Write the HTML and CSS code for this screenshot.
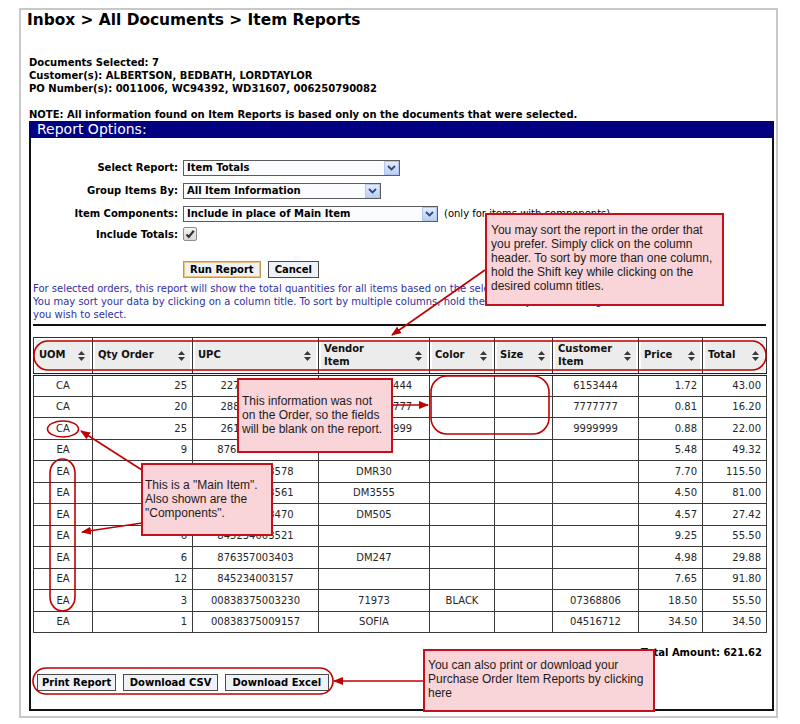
FILE: index.html
```html
<!DOCTYPE html>
<html>
<head>
<meta charset="utf-8">
<title>Item Reports</title>
<link rel="stylesheet" href="styles.css">
</head>
<body>
<div class="page">
  <h1 class="crumbs">Inbox &gt; All Documents &gt; Item Reports</h1>
  <div class="summary">
    <div>Documents Selected: 7</div>
    <div>Customer(s): ALBERTSON, BEDBATH, LORDTAYLOR</div>
    <div>PO Number(s): 0011006, WC94392, WD31607, 006250790082</div>
  </div>
  <div class="note">NOTE: All information found on Item Reports is based only on the documents that were selected.</div>
  <div class="bar">Report Options:</div>
  <div class="panel">
    <div class="form">
      <div class="lbl">Select Report:</div>
      <div class="ctl">
        <div class="select s1"><span class="val">Item Totals</span><span class="drop"><svg width="9" height="6" viewBox="0 0 9 6"><path d="M1 1l3.5 3.5L8 1" stroke="#34477a" stroke-width="1.8" fill="none"/></svg></span></div>
      </div>
      <div class="lbl">Group Items By:</div>
      <div class="ctl">
        <div class="select s2"><span class="val">All Item Information</span><span class="drop"><svg width="9" height="6" viewBox="0 0 9 6"><path d="M1 1l3.5 3.5L8 1" stroke="#34477a" stroke-width="1.8" fill="none"/></svg></span></div>
      </div>
      <div class="lbl">Item Components:</div>
      <div class="ctl">
        <div class="select s3"><span class="val">Include in place of Main Item</span><span class="drop"><svg width="9" height="6" viewBox="0 0 9 6"><path d="M1 1l3.5 3.5L8 1" stroke="#34477a" stroke-width="1.8" fill="none"/></svg></span></div>
        <span class="hint">(only for items with components)</span>
      </div>
      <div class="lbl">Include Totals:</div>
      <div class="ctl">
        <span class="check"><svg width="12" height="12" viewBox="0 0 12 12"><path d="M2.5 6.5l2.3 2.4L9.8 2.8" stroke="#333" stroke-width="2.2" fill="none"/></svg></span>
      </div>
    </div>
    <div class="actions">
      <button class="btn focus" type="button">Run Report</button>
      <button class="btn" type="button">Cancel</button>
    </div>
    <p class="help">For selected orders, this report will show the total quantities for all items based on the selections made in the "Group Items By" menu.<br>You may sort your data by clicking on a column title. To sort by multiple columns, hold the Shift key while clicking on the column headers<br>you wish to select.</p>
    <hr class="rule">
    <table class="grid">
      <colgroup>
        <col class="w-uom"><col class="w-qty"><col class="w-upc"><col class="w-ven"><col class="w-col"><col class="w-size"><col class="w-cust"><col class="w-price"><col class="w-tot">
      </colgroup>
      <thead>
        <tr>
          <th><div class="th"><span>UOM</span><svg class="sort" width="7" height="10" viewBox="0 0 7 10"><path d="M3.5 0L7 4H0Z M0 6H7L3.5 10Z"/></svg></div></th>
          <th><div class="th"><span>Qty Order</span><svg class="sort" width="7" height="10" viewBox="0 0 7 10"><path d="M3.5 0L7 4H0Z M0 6H7L3.5 10Z"/></svg></div></th>
          <th><div class="th"><span>UPC</span><svg class="sort" width="7" height="10" viewBox="0 0 7 10"><path d="M3.5 0L7 4H0Z M0 6H7L3.5 10Z"/></svg></div></th>
          <th><div class="th"><span>Vendor<br>Item</span><svg class="sort" width="7" height="10" viewBox="0 0 7 10"><path d="M3.5 0L7 4H0Z M0 6H7L3.5 10Z"/></svg></div></th>
          <th><div class="th"><span>Color</span><svg class="sort" width="7" height="10" viewBox="0 0 7 10"><path d="M3.5 0L7 4H0Z M0 6H7L3.5 10Z"/></svg></div></th>
          <th><div class="th"><span>Size</span><svg class="sort" width="7" height="10" viewBox="0 0 7 10"><path d="M3.5 0L7 4H0Z M0 6H7L3.5 10Z"/></svg></div></th>
          <th><div class="th"><span>Customer<br>Item</span><svg class="sort" width="7" height="10" viewBox="0 0 7 10"><path d="M3.5 0L7 4H0Z M0 6H7L3.5 10Z"/></svg></div></th>
          <th><div class="th"><span>Price</span><svg class="sort" width="7" height="10" viewBox="0 0 7 10"><path d="M3.5 0L7 4H0Z M0 6H7L3.5 10Z"/></svg></div></th>
          <th><div class="th"><span>Total</span><svg class="sort" width="7" height="10" viewBox="0 0 7 10"><path d="M3.5 0L7 4H0Z M0 6H7L3.5 10Z"/></svg></div></th>
        </tr>
      </thead>
      <tbody>
        <tr><td class="c">CA</td><td class="r">25</td><td class="c">22733461534</td><td class="c">010226153444</td><td class="c"></td><td></td><td class="c">6153444</td><td class="r">1.72</td><td class="r">43.00</td></tr>
        <tr><td class="c">CA</td><td class="r">20</td><td class="c">28811277777</td><td class="c">010227777777</td><td class="c"></td><td></td><td class="c">7777777</td><td class="r">0.81</td><td class="r">16.20</td></tr>
        <tr><td class="c">CA</td><td class="r">25</td><td class="c">26199299999</td><td class="c">010229999999</td><td class="c"></td><td></td><td class="c">9999999</td><td class="r">0.88</td><td class="r">22.00</td></tr>
        <tr><td class="c">EA</td><td class="r">9</td><td class="c">876357003397</td><td class="c"></td><td class="c"></td><td></td><td class="c"></td><td class="r">5.48</td><td class="r">49.32</td></tr>
        <tr><td class="c">EA</td><td class="r">15</td><td class="c">845234003578</td><td class="c">DMR30</td><td class="c"></td><td></td><td class="c"></td><td class="r">7.70</td><td class="r">115.50</td></tr>
        <tr><td class="c">EA</td><td class="r">18</td><td class="c">845234003561</td><td class="c">DM3555</td><td class="c"></td><td></td><td class="c"></td><td class="r">4.50</td><td class="r">81.00</td></tr>
        <tr><td class="c">EA</td><td class="r">6</td><td class="c">876357003470</td><td class="c">DM505</td><td class="c"></td><td></td><td class="c"></td><td class="r">4.57</td><td class="r">27.42</td></tr>
        <tr><td class="c">EA</td><td class="r">6</td><td class="c">845234003521</td><td class="c"></td><td class="c"></td><td></td><td class="c"></td><td class="r">9.25</td><td class="r">55.50</td></tr>
        <tr><td class="c">EA</td><td class="r">6</td><td class="c">876357003403</td><td class="c">DM247</td><td class="c"></td><td></td><td class="c"></td><td class="r">4.98</td><td class="r">29.88</td></tr>
        <tr><td class="c">EA</td><td class="r">12</td><td class="c">845234003157</td><td class="c"></td><td class="c"></td><td></td><td class="c"></td><td class="r">7.65</td><td class="r">91.80</td></tr>
        <tr><td class="c">EA</td><td class="r">3</td><td class="c">00838375003230</td><td class="c">71973</td><td class="c">BLACK</td><td></td><td class="c">07368806</td><td class="r">18.50</td><td class="r">55.50</td></tr>
        <tr><td class="c">EA</td><td class="r">1</td><td class="c">00838375009157</td><td class="c">SOFIA</td><td class="c"></td><td></td><td class="c">04516712</td><td class="r">34.50</td><td class="r">34.50</td></tr>
      </tbody>
    </table>
    <div class="total">Total Amount: 621.62</div>
    <div class="exports">
      <button class="btn b-print" type="button">Print Report</button>
      <button class="btn b-csv" type="button">Download CSV</button>
      <button class="btn b-xls" type="button">Download Excel</button>
    </div>
  </div>
</div>

<div class="annot">
  <svg class="marks" width="800" height="724" viewBox="0 0 800 724">
    <defs>
      <marker id="ah" markerUnits="userSpaceOnUse" markerWidth="10" markerHeight="8" refX="9" refY="4" orient="auto">
        <path d="M0 0L10 4L0 8Z" fill="#c00000"/>
      </marker>
    </defs>
    <g fill="none" stroke="#c00000" stroke-width="1.6">
      <rect x="34" y="341" width="732" height="29" rx="14" ry="14"/>
      <rect x="431" y="376" width="118" height="58" rx="16" ry="16"/>
      <ellipse cx="63" cy="429" rx="15.5" ry="8"/>
      <rect x="50" y="459" width="25" height="152" rx="12.5" ry="14"/>
      <rect x="33" y="668" width="300" height="26" rx="13" ry="13"/>
      <line x1="485" y1="270" x2="392" y2="335" marker-end="url(#ah)"/>
      <line x1="393" y1="405" x2="428" y2="405" marker-end="url(#ah)"/>
      <line x1="142" y1="470" x2="81" y2="431" marker-end="url(#ah)"/>
      <line x1="142" y1="523" x2="82" y2="532" marker-end="url(#ah)"/>
      <line x1="423" y1="681" x2="334" y2="681" marker-end="url(#ah)"/>
    </g>
  </svg>
  <div class="callout c1">You may sort the report in the order that you prefer. Simply click on the column header. To sort by more than one column, hold the Shift key while clicking on the desired column titles.</div>
  <div class="callout c2">This information was not on the Order, so the fields will be blank on the report.</div>
  <div class="callout c3">This is a "Main Item".<br>Also shown are the<br>"Components".</div>
  <div class="callout c4">You can also print or download your Purchase Order Item Reports by clicking here</div>
</div>
</body>
</html>
```

FILE: styles.css
```css
* { box-sizing: border-box; }

body {
  margin: 0;
  width: 800px;
  height: 724px;
  overflow: hidden;
  position: relative;
  background: #fff;
  color: #000;
  font-family: "DejaVu Sans", Verdana, sans-serif;
}

.page {
  margin: 8px 0 0 19px;
  width: 759px;
  border: 2px solid #c8c8c8;
  padding: 1px 2px 5px 8px;
}

.crumbs {
  margin: 0 0 0 -2px;
  font-size: 15.4px;
  line-height: 18px;
  font-weight: bold;
}

.summary {
  margin-top: 27px;
  font-size: 10px;
  line-height: 13px;
  font-weight: bold;
}

.note {
  margin-top: 13px;
  font-size: 10px;
  line-height: 13px;
  font-weight: bold;
}

.bar {
  height: 16px;
  background: #000080;
  color: #fff;
  font-size: 14px;
  line-height: 16px;
  padding-left: 8px;
}

.panel {
  border: 2px solid #111;
  border-top-width: 1px;
  padding: 18px 6px 18px 2px;
}

.form {
  display: grid;
  grid-template-columns: 145px 1fr;
  grid-template-rows: 23px 23px 23px 18px;
  column-gap: 5px;
  font-size: 10px;
}

.lbl {
  font-weight: bold;
  text-align: right;
  align-self: center;
}

.ctl {
  display: flex;
  align-items: center;
  gap: 6px;
}

.select {
  display: flex;
  align-items: center;
  height: 16px;
  border: 1px solid #5c5c5c;
  background: #fafcff;
  font-weight: bold;
  font-size: 10px;
}

.select .val {
  flex: 1;
  padding-left: 3px;
  line-height: 14px;
  white-space: nowrap;
}

.select .drop {
  width: 15px;
  height: 14px;
  display: flex;
  align-items: center;
  justify-content: center;
  background: linear-gradient(#e3ebfc, #bccff5);
  border: 1px solid #b3c6ee;
}

.s1 { width: 217px; }
.s2 { width: 198px; }
.s3 { width: 255px; }

.hint {
  font-weight: normal;
  white-space: nowrap;
}

.check {
  width: 14px;
  height: 14px;
  border: 1px solid #8d8d8d;
  border-radius: 2px;
  background: linear-gradient(#f2f2f2, #d8d8d8);
  display: flex;
  align-items: center;
  justify-content: center;
}

.actions {
  display: flex;
  gap: 7px;
  margin-top: 18px;
  padding-left: 150px;
}

.btn {
  height: 17px;
  padding: 0 6px;
  border: 1px solid #4a4a4a;
  background: #eef2f7;
  color: #000;
  font-family: "DejaVu Sans", Verdana, sans-serif;
  font-size: 10px;
  font-weight: bold;
  line-height: 14px;
}

.btn.focus {
  border-color: #c2955a;
  box-shadow: inset 0 0 0 1px #f0c27c;
}

.help {
  margin: 4px 0 0 0;
  font-size: 10px;
  line-height: 13px;
  color: #3030a0;
  white-space: nowrap;
}

.rule {
  margin: 3px 0 11px 0;
  width: 733px;
  height: 2px;
  border: 0;
  background: #111;
}

.grid {
  border-collapse: collapse;
  table-layout: fixed;
  width: 733px;
  font-size: 10px;
  color: #262626;
}

.w-uom { width: 59px; }
.w-qty { width: 100px; }
.w-upc { width: 126px; }
.w-ven { width: 111px; }
.w-col { width: 65px; }
.w-size { width: 58px; }
.w-cust { width: 86px; }
.w-price { width: 64px; }
.w-tot { width: 64px; }

.grid th {
  height: 37px;
  padding: 0 7px 0 5px;
  border: 1px solid #333;
  border-bottom: 3px double #222;
  background: #ececec;
  box-shadow: inset 0 0 0 2px #fff;
  text-align: left;
  font-weight: bold;
  color: #111;
}

.th {
  display: flex;
  align-items: center;
  justify-content: space-between;
  line-height: 12.5px;
}

.sort { fill: #3a3a3a; flex: none; }

.grid td {
  height: 21.5px;
  padding: 0 5px;
  border: 1px solid #3a3a3a;
  white-space: nowrap;
  overflow: hidden;
}

.grid td.c { text-align: center; }
.grid td.r { text-align: right; }

.total {
  margin-top: 13px;
  width: 733px;
  text-align: right;
  padding-right: 4px;
  font-size: 10px;
  line-height: 14px;
  font-weight: bold;
}

.exports {
  display: flex;
  gap: 7px;
  margin: 14px 0 0 4px;
}

.exports .b-print { padding: 0 4px; }
.exports .b-csv { padding: 0 5.5px; }
.exports .b-xls { padding: 0 6.5px; }

/* annotation layer */
.annot {
  position: absolute;
  left: 0;
  top: 0;
  width: 800px;
  height: 724px;
  pointer-events: none;
}

.marks {
  position: absolute;
  left: 0;
  top: 0;
}

.callout {
  position: absolute;
  background: #f9d4d8;
  border: 2px solid #c4101c;
  font-family: "Liberation Sans", Arial, sans-serif;
  font-size: 12px;
  line-height: 14px;
  color: #1c1c1c;
}

.c1 { left: 485px; top: 213px; width: 239px; height: 93px; padding: 8px 3px 0 4px; }
.c2 { left: 237px; top: 378px; width: 156px; height: 75px; padding: 14px 3px 0 3px; }
.c3 { left: 141px; top: 463px; width: 132px; height: 73px; padding: 13px 2px 0 2px; }
.c4 { left: 423px; top: 649px; width: 232px; height: 63px; padding: 7px 3px 0 3px; }
```
